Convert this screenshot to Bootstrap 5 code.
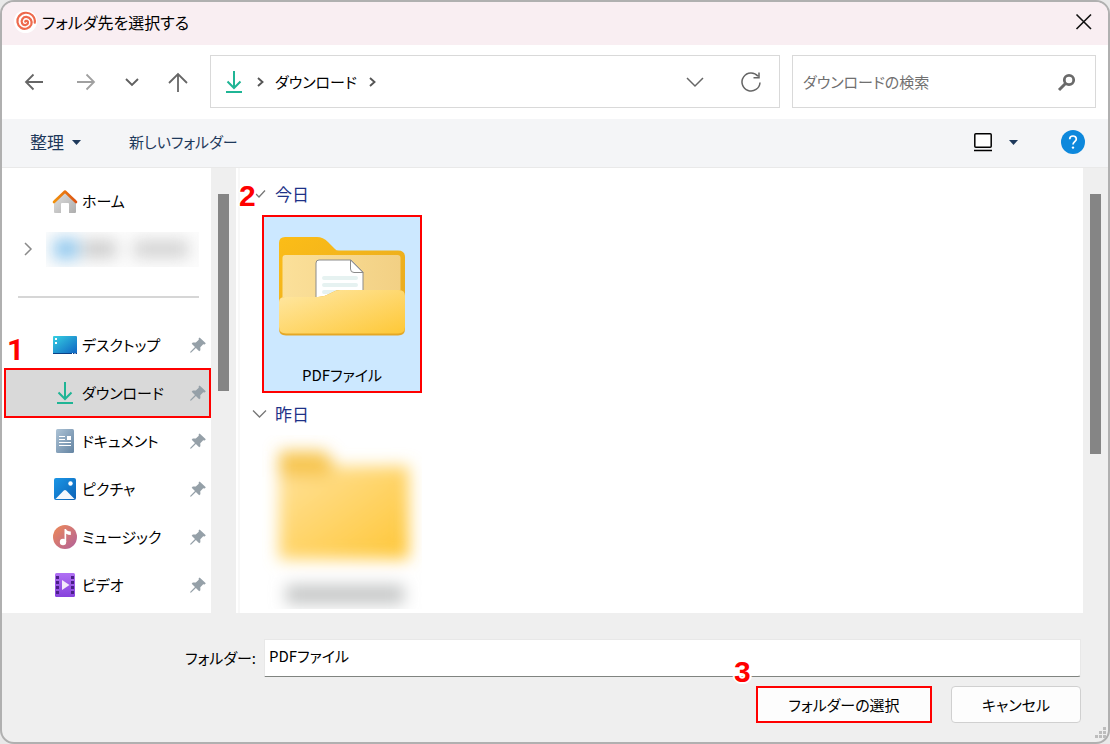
<!DOCTYPE html>
<html lang="ja">
<head>
<meta charset="utf-8">
<meta name="viewport" content="width=device-width, initial-scale=1">
<title>フォルダ先を選択する</title>
<link href="https://cdn.jsdelivr.net/npm/bootstrap@5.3.0/dist/css/bootstrap.min.css" rel="stylesheet">
<style>
  body { background: #e9e9e9; font-family: "Noto Sans CJK JP", sans-serif; font-size: 15px; line-height: 24px; color: #000; font-feature-settings: "palt"; }
  svg { display: block; flex: none; }
  button, input { color: inherit; font-feature-settings: inherit; }
  .dialog { border: 2px solid #b0b0b0; border-radius: 14px; background: #efefef; min-height: 100vh; }
  .title-bar { background: #f9eef2; height: 43px; padding: 0 14px 4px 12px; gap: 5px; font-size: 16px; }
  .nav-bar { background: #fff; height: 74px; padding: 10px 12px 0 17px; gap: 12px; }
  .nav-buttons { width: 179px; height: 53px; gap: 16px; }
  .plain { background: none; border: 0; padding: 0; display: flex; align-items: center; justify-content: center; text-decoration: none; color: inherit; }
  .nav-buttons .plain { width: 30px; height: 32px; }
  .nav-buttons .forward { margin-left: 6px; }
  .boxed { border: 1px solid #d9d9d9; height: 53px; background: #fff; min-width: 0; }
  .address { flex: 570 1 570px; padding: 0 17px 0 12px; }
  .address-tools { gap: 36px; }
  .search { flex: 304 1 304px; padding: 0 18px 0 10px; }
  .search input { border: 0; outline: 0; padding: 0; min-width: 0; background: none; }
  .search input::placeholder { color: #707070; opacity: 1; }
  .tool-bar { background: #f4f5f7; border-bottom: 1px solid #e9e9e9; height: 49px; padding: 0 23px 2px 28px; color: #1e395b; }
  .tool-bar .arrange { font-size: 17px; }
  .tool-bar .view-mode { margin-right: 43px; }
  .panes { flex: 1 1 445px; min-height: 445px; }
  .side { width: 209px; background: #fff; padding-top: 9px; flex: none; }
  .place { height: 48px; margin: 0 1px 0 3px; padding: 0 4px 0 47px; gap: 4px; position: relative; }
  .place .glyph { width: 26px; display: flex; justify-content: center; flex: none; }
  .place .chev { position: absolute; left: 18px; }
  .place.chosen { background: #d9d9d9; outline: 2px solid #f00; outline-offset: -1px; }
  .rule { height: 48px; padding: 0 12px 0 16px; display: flex; align-items: center; }
  .rule hr { margin: 0; width: 100%; border-top: 2px solid #d6d6d6; opacity: 1; }
  .hidden-name { height: 35px; width: 153px; margin-left: -6px; overflow: hidden; background: #fcfcfc; display: flex; align-items: center; }
  .hidden-name svg { filter: blur(8px); }
  .track { width: 25px; background: #efefef; padding: 26px 7px 0; flex: none; }
  .thumb { background: #858585; width: 11px; }
  .thumb-side { height: 47%; }
  .thumb-files { height: 62%; }
  .files { background: #fff; padding: 12px 16px 0 24px; border-left: 2px solid #fff; box-shadow: inset 2px 0 #f8f8f8; }
  .group-head { height: 28px; color: #1e3287; gap: 8px; margin-left: -10px; margin-bottom: 7px; position: relative; font-size: 17px; }
  .tile { width: 160px; height: 178px; padding-top: 19px; margin-bottom: 7px; display: flex; flex-direction: column; align-items: center; }
  .tile.chosen { background: #cce8ff; border: 2px solid #f00; }
  .tile .caption { margin-top: 27px; }
  .foot { padding: 26px 27px 19px 16px; gap: 9px; }
  .foot label { width: 238px; text-align: right; }
  .foot input { height: 38px; border: 1px solid #e8e8e8; border-bottom-color: #808480; padding: 0 4px 6px; background: #fff; border-radius: 0 0 3px 0; outline: 0; min-width: 0; }
  .acts { gap: 19px; }
  .act { height: 37px; background: #fdfdfd; border: 1px solid #d0d0d0; border-radius: 4px; padding: 0; }
  .act-ok { width: 176px; border: 2px solid #f00; border-radius: 0; }
  .act-cancel { width: 130px; }
  .step { position: absolute; font: bold 30px/24px "Liberation Sans", Arial, sans-serif; color: #f00; text-shadow: 1px 1px #fff, -1px 1px #fff, 1px -1px #fff, -1px -1px #fff, 2px 0 #fff, -2px 0 #fff, 0 2px #fff, 0 -2px #fff; z-index: 2; }
  .step-1 { left: 2px; top: -31px; font-family: Roboto, sans-serif; }
  .step-2 { left: -13px; top: 4px; }
  .step-3 { left: -22px; top: -26px; }
  .grip { position: absolute; right: 1px; bottom: 3px; }
</style>
</head>
<body>
<svg width="0" height="0" class="position-absolute" aria-hidden="true">
  <defs>
    <symbol id="pin" viewBox="0 0 16 16"><path d="M9.6 0.4 15.8 6.3 14.7 7.4 13.2 7.2 10.3 10.3 10.4 13.3 9.2 14.2 5.9 10.9 1.2 15.6 0.2 15.8 0.3 14.8 5 10 1.7 6.8 2.8 5.5 5.8 5.6 8.8 2.8 8.6 1.5Z" fill="#95a0a8"/></symbol>
    <symbol id="down" viewBox="0 0 18 24"><path d="M9 1V17.500M2.500 11.500 9 18l6.500-6.500" fill="none" stroke="#1fb595" stroke-width="2"/><path d="M1 22H17" stroke="#1fb595" stroke-width="2"/></symbol>
  </defs>
</svg>
<div class="dialog d-flex flex-column overflow-hidden position-relative">
  <header class="title-bar d-flex align-items-center">
    <svg width="23" height="23" viewBox="0 0 23 23"><circle cx="11.500" cy="11.500" r="11.500" fill="#fff"/><path d="M11.200 11.700C11.800 10 14.400 10.800 14 13 13.500 15.500 9.600 16 8.100 13.400 6.500 10 9.200 6.700 12.400 6.900 16.500 7.200 18.500 11.300 17.300 14.700 15.700 18.600 10.500 20 7 17.800 3 15.200 2.300 9.800 5 6.200 8.300 2 14.500 1.600 18.300 5.200 20.400 7.300 21.200 10 20.700 12.700" fill="none" stroke="#ee6a4d" stroke-width="2.200" stroke-linecap="round"/></svg>
    <span>フォルダ先を選択する</span>
    <button class="plain ms-auto" type="button" aria-label="閉じる"><svg width="20" height="20" viewBox="0 0 20 20"><path d="M2.500 2.500 17 17M17 2.500 2.500 17" stroke="#111" stroke-width="1.600"/></svg></button>
  </header>

  <div class="nav-bar d-flex align-items-start">
    <div class="nav-buttons d-flex align-items-center flex-shrink-0">
      <button class="plain" type="button" aria-label="戻る"><svg width="20" height="20" viewBox="0 0 20 20"><path d="M19 10H2M9.500 2.500 2 10l7.500 7.500" fill="none" stroke="#666" stroke-width="1.800"/></svg></button>
      <button class="plain forward" type="button" aria-label="進む"><svg width="20" height="20" viewBox="0 0 20 20"><path d="M1 10H18M10.500 2.500 18 10l-7.500 7.500" fill="none" stroke="#a0a0a0" stroke-width="1.800"/></svg></button>
      <button class="plain" type="button" aria-label="最近の場所"><svg width="16" height="16" viewBox="0 0 16 16"><path d="M2 5 8 11 14 5" fill="none" stroke="#606060" stroke-width="1.900"/></svg></button>
      <button class="plain" type="button" aria-label="上へ"><svg width="20" height="22" viewBox="0 0 20 22"><path d="M10 21V3M1 12 10 3l9 9" fill="none" stroke="#666" stroke-width="1.800"/></svg></button>
    </div>
    <div class="boxed address d-flex align-items-center">
      <svg width="22" height="24"><use href="#down" width="22" height="24"/></svg>
      <svg class="ms-2" width="14" height="12" viewBox="0 0 14 12"><path d="M5 2 9.500 6 5 10" fill="none" stroke="#555" stroke-width="1.900"/></svg>
      <a class="plain mx-2" href="#">ダウンロード</a>
      <svg width="14" height="12" viewBox="0 0 14 12"><path d="M5 2 9.500 6 5 10" fill="none" stroke="#555" stroke-width="1.900"/></svg>
      <div class="address-tools d-flex align-items-center ms-auto">
        <button class="plain" type="button" aria-label="履歴"><svg width="18" height="12" viewBox="0 0 18 12"><path d="M1 2 9 10 17 2" fill="none" stroke="#666" stroke-width="1.500"/></svg></button>
        <button class="plain" type="button" aria-label="更新"><svg width="22" height="22" viewBox="0 0 22 22"><path d="M20 11.500A9 9 0 1 1 18 5.300M19 1.500V6.800H13.500" fill="none" stroke="#666" stroke-width="1.500"/></svg></button>
      </div>
    </div>
    <div class="boxed search d-flex align-items-center">
      <input class="flex-grow-1" type="text" placeholder="ダウンロードの検索" aria-label="ダウンロードの検索">
      <button class="plain" type="button" aria-label="検索"><svg width="20" height="20" viewBox="0 0 20 20"><circle cx="12" cy="8" r="4.700" fill="none" stroke="#6a6a6a" stroke-width="2.800"/><path d="M8.500 11.500 2 18" stroke="#6a6a6a" stroke-width="3"/></svg></button>
    </div>
  </div>

  <div class="tool-bar d-flex align-items-center flex-shrink-0">
    <button class="plain arrange gap-2" type="button">整理 <svg width="9" height="5"><path d="M0 0H9L4.500 5Z" fill="#1e395b"/></svg></button>
    <button class="plain ms-5" type="button">新しいフォルダー</button>
    <button class="plain view-mode ms-auto gap-3" type="button" aria-label="表示"><svg width="20" height="20" viewBox="0 0 20 20"><rect x="1.800" y="1.800" width="16.400" height="13.400" rx="1" fill="#fff" stroke="#000" stroke-width="1.500"/><path d="M1 18.500H19" stroke="#000" stroke-width="1.300"/></svg><svg width="9" height="5"><path d="M0 0H9L4.500 5Z" fill="#1e395b"/></svg></button>
    <button class="plain" type="button" aria-label="ヘルプ"><svg width="24" height="24" viewBox="0 0 24 24"><circle cx="12" cy="12" r="12" fill="#0d88dc"/><path d="M8.700 9.200C8.700 5 15.300 5 15.300 9 15.300 11.600 12 11.800 12 14.600" fill="none" stroke="#fff" stroke-width="1.700"/><circle cx="12" cy="17.600" r="1.200" fill="#fff"/></svg></button>
  </div>

  <main class="panes d-flex">
    <nav class="side">
      <a class="plain place justify-content-start" href="#"><span class="glyph"><svg width="26" height="26" viewBox="0 0 26 26"><defs><linearGradient id="wall" x1="0" y1="0" x2="1" y2="1"><stop offset="0" stop-color="#e2e2e2"/><stop offset="1" stop-color="#adadad"/></linearGradient><linearGradient id="roof"><stop offset="0" stop-color="#f2920c"/><stop offset="1" stop-color="#dd5314"/></linearGradient></defs><path d="M2 12 13 3 24 12V24Q24 25 23 25H17V16Q17 15 16 15H10Q9 15 9 16V25H3Q2 25 2 24Z" fill="url(#wall)"/><path d="M2 14 13 3.500 24 14" fill="none" stroke="url(#roof)" stroke-width="2.600" stroke-linecap="round" stroke-linejoin="round"/></svg></span>ホーム</a>
      <a class="plain place justify-content-start" href="#" aria-label="個人用フォルダー"><svg class="chev" width="10" height="16" viewBox="0 0 10 16"><path d="M2 2 8 8 2 14" fill="none" stroke="#8a8a8a" stroke-width="1.500"/></svg><span class="hidden-name"><svg width="153" height="35"><rect x="8" y="7" width="24" height="20" fill="#8cc6ee"/><rect x="36" y="9" width="34" height="16" fill="#c8c8c8"/><rect x="88" y="9" width="54" height="16" fill="#cfcfcf"/></svg></span></a>
      <div class="rule"><hr></div>
      <a class="plain place justify-content-start" href="#"><span class="glyph"><svg width="24" height="18" viewBox="0 0 24 18"><defs><linearGradient id="desk" x1="0" y1="0" x2="1" y2="1"><stop offset="0" stop-color="#36d0e2"/><stop offset="1" stop-color="#0e62c2"/></linearGradient></defs><rect width="24" height="18" rx="1" fill="url(#desk)"/><path d="M0 17.500H24" stroke="#0b4186"/><path d="M2 3H4M2 7H4" stroke="#fff" stroke-width="2"/><path d="M19 17.500H20M21.500 17.500H22.500" stroke="#fff"/></svg></span>デスクトップ<svg class="ms-auto" width="16" height="16"><use href="#pin"/></svg></a>
      <a class="plain place chosen justify-content-start" href="#"><span class="step step-1">1</span><span class="glyph"><svg width="18" height="24"><use href="#down"/></svg></span>ダウンロード<svg class="ms-auto" width="16" height="16"><use href="#pin"/></svg></a>
      <a class="plain place justify-content-start" href="#"><span class="glyph"><svg width="18" height="24" viewBox="0 0 18 24"><defs><linearGradient id="doc" x1="0" y1="0" x2="1" y2="1"><stop offset="0" stop-color="#adc3d6"/><stop offset="1" stop-color="#6484a2"/></linearGradient></defs><rect width="18" height="24" rx="1.500" fill="url(#doc)"/><path d="M3 7.500H9M3 10.500H9M3 13.500H15M3 16.500H15" stroke="#fff"/><rect x="11" y="7" width="4" height="4" fill="#fff"/></svg></span>ドキュメント<svg class="ms-auto" width="16" height="16"><use href="#pin"/></svg></a>
      <a class="plain place justify-content-start" href="#"><span class="glyph"><svg width="22" height="22" viewBox="0 0 22 22"><defs><linearGradient id="pic" x1="0" y1="0" x2="1" y2="1"><stop offset="0" stop-color="#1b96e6"/><stop offset="1" stop-color="#0c62b6"/></linearGradient></defs><rect width="22" height="22" rx="2" fill="url(#pic)"/><circle cx="16.500" cy="5.500" r="2.200" fill="#fff"/><path d="M1.500 21 9.800 12.500Q11 11.500 12.200 12.500L20.500 21Z" fill="#f4f8fc"/></svg></span>ピクチャ<svg class="ms-auto" width="16" height="16"><use href="#pin"/></svg></a>
      <a class="plain place justify-content-start" href="#"><span class="glyph"><svg width="24" height="24" viewBox="0 0 24 24"><defs><linearGradient id="mus" x1="0" y1="0" x2="1" y2="1"><stop offset="0" stop-color="#ef8a55"/><stop offset="1" stop-color="#b0609c"/></linearGradient></defs><circle cx="12" cy="12" r="12" fill="url(#mus)"/><circle cx="10" cy="17" r="3.200" fill="#fff"/><path d="M11.500 17V4H13Q13.500 6 17.800 6.500V10Q15 10 13.200 8.800V17Z" fill="#fff"/></svg></span>ミュージック<svg class="ms-auto" width="16" height="16"><use href="#pin"/></svg></a>
      <a class="plain place justify-content-start" href="#"><span class="glyph"><svg width="20" height="24" viewBox="0 0 20 24"><defs><linearGradient id="vid" x1="0" y1="0" x2="0" y2="1"><stop offset="0" stop-color="#b070f4"/><stop offset="1" stop-color="#8742dc"/></linearGradient></defs><rect width="20" height="24" rx="1.500" fill="url(#vid)"/><path d="M2.500 3V22M17.500 3V22" stroke="#4a2088" stroke-width="3" stroke-dasharray="3 2"/><path d="M7 7 14.500 12 7 17Z" fill="#f2eafa"/></svg></span>ビデオ<svg class="ms-auto" width="16" height="16"><use href="#pin"/></svg></a>
    </nav>
    <div class="track"><div class="thumb thumb-side"></div></div>

    <section class="files flex-grow-1">
      <div class="group-head d-flex align-items-center"><span class="step step-2">2</span><svg width="15" height="12" viewBox="0 0 15 12"><path d="M4 6 7 9 13 2.500" fill="none" stroke="#777" stroke-width="1.300"/></svg><span>今日</span></div>
      <div class="tile chosen">
        <svg width="128" height="100" viewBox="0 0 128 100">
          <defs>
            <linearGradient id="back" x1="0" y1="0" x2="1" y2="1"><stop offset="0" stop-color="#fcbd17"/><stop offset="1" stop-color="#e5a823"/></linearGradient>
            <linearGradient id="inner"><stop offset="0" stop-color="#fbe09a"/><stop offset="1" stop-color="#f2d084"/></linearGradient>
            <linearGradient id="front" x1="0" y1="0" x2="1" y2="1"><stop offset="0" stop-color="#ffe8a6"/><stop offset="1" stop-color="#fec837"/></linearGradient>
          </defs>
          <path d="M1 7Q1 1 7 1H39Q45 1 50 6L57 13Q58 14.500 61 14.500H120Q127 14.500 127 21V92H1Z" fill="url(#back)"/>
          <rect x="4.500" y="19" width="118" height="60" rx="3" fill="url(#inner)"/>
          <path d="M38 70V27Q38 24 41 24H73L85 36V70Z" fill="#fff" stroke="#8b8b8b"/>
          <path d="M72.500 24V33Q72.500 36.500 76 36.500H85Z" fill="#fff" stroke="#8b8b8b"/>
          <path d="M46 42H78M46 49H78M46 56H60" stroke="#e6f2f1" stroke-width="4" stroke-linecap="round"/>
          <path d="M1 66Q1 61 7 61H40Q46 61 51 58L55 56Q58 54 62 54H121Q127 54 127 60V93Q127 99.500 120 99.500H8Q1 99.500 1 93Z" fill="#e5a826"/>
          <path d="M1 66Q1 61 7 61H40Q46 61 51 58L55 56Q58 54 62 54H121Q127 54 127 60V91Q127 97.500 120 97.500H8Q1 97.500 1 91Z" fill="url(#front)"/>
        </svg>
        <span class="caption">PDFファイル</span>
      </div>
      <div class="group-head d-flex align-items-center"><svg width="15" height="12" viewBox="0 0 15 12"><path d="M1 2.500 7.500 9 14 2.500" fill="none" stroke="#777" stroke-width="1.300"/></svg><span>昨日</span></div>
      <div class="tile pt-0">
        <svg width="160" height="174" viewBox="0 0 160 174">
          <defs><filter id="soft" x="-20%" y="-20%" width="140%" height="150%"><feGaussianBlur stdDeviation="8"/></filter>
          <linearGradient id="cover" x1="0" y1="0" x2="1" y2="1"><stop offset="0" stop-color="#ffe29a"/><stop offset="1" stop-color="#fec636"/></linearGradient></defs>
          <g filter="url(#soft)"><path d="M17 16H62L74 30V44H17Z" fill="#f7c651"/><path d="M17 42H62L74 31H147V124H17Z" fill="url(#cover)"/><rect x="24" y="150" width="118" height="19" fill="#c4c6c6"/></g>
        </svg>
      </div>
    </section>
    <div class="track"><div class="thumb thumb-files"></div></div>
  </main>

  <footer class="foot d-flex flex-column">
    <div class="d-flex align-items-center gap-2">
      <label for="folder">フォルダー:</label>
      <input class="flex-grow-1" id="folder" type="text" value="PDFファイル">
    </div>
    <div class="acts d-flex justify-content-end">
      <div class="position-relative"><span class="step step-3">3</span><button class="act act-ok" type="button">フォルダーの選択</button></div>
      <button class="act act-cancel" type="button">キャンセル</button>
    </div>
    <svg class="grip" width="12" height="12" viewBox="0 0 12 12"><path d="M8 0h3v3H8zM8 4h3v3H8zM4 4h3v3H4zM8 8h3v3H8zM4 8h3v3H4zM0 8h3v3H0z" fill="#bdbdbd"/></svg>
  </footer>
</div>
<script src="https://cdn.jsdelivr.net/npm/bootstrap@5.3.0/dist/js/bootstrap.bundle.min.js"></script>
</body>
</html>
